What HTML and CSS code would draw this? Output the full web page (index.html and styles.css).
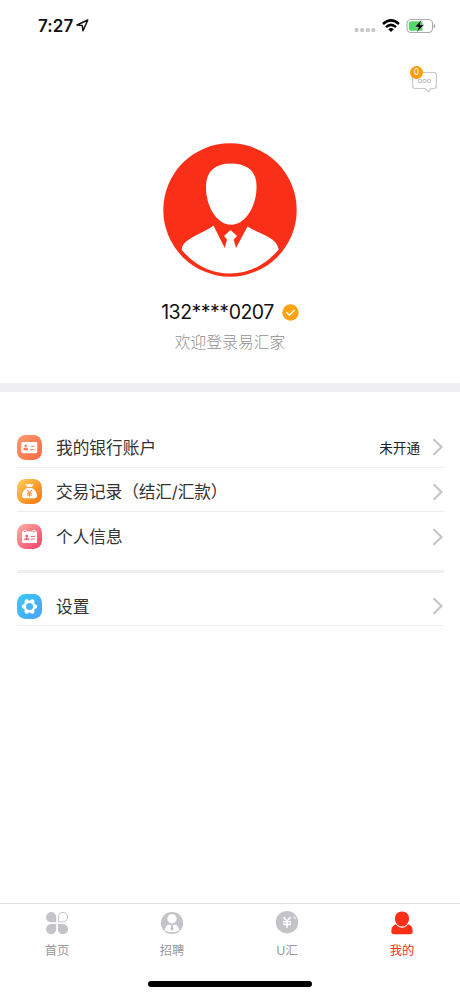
FILE: index.html
```html
<!DOCTYPE html>
<html lang="zh-CN">
<head>
<meta charset="utf-8">
<title>我的</title>
<link rel="stylesheet" href="styles.css">
</head>
<body>
<div class="app">
  <header class="status">
    <div class="clock">
      <span class="time">7:27</span>
      <svg width="13" height="13" viewBox="0 0 13 13"><path d="M1 6 11.8 1 7 11.8 6.3 6.6Z" fill="none" stroke="#111" stroke-width="1.5" stroke-linejoin="round"/></svg>
    </div>
    <div class="signals">
      <svg class="cell" width="22" height="6" viewBox="0 0 22 6" fill="#c8c8c8"><rect x="0.5" y="1" width="4" height="4" rx="1.5"/><rect x="6.2" y="1" width="4" height="4" rx="1.5"/><rect x="11.9" y="1" width="4" height="4" rx="1.5"/><rect x="17.4" y="1" width="4" height="4" rx="1.5"/></svg>
      <svg class="wifi" width="18" height="14" viewBox="0 0 18 14" fill="none" stroke="#000" stroke-width="2.5"><path d="M1 5Q9-2.2 17 5"/><path d="M4 8.1Q9 3.7 14 8.1"/><path d="M9 13 6.2 10.2Q9 7.9 11.8 10.2Z" fill="#000" stroke="none"/></svg>
      <svg class="battery" width="30" height="16" viewBox="0 0 30 16"><rect x="1" y="1.5" width="25.5" height="13" rx="4" fill="#fff" stroke="#aaa" stroke-width="1.1"/><path d="M5 3.3H16.5V12.7H5Q2.8 12.7 2.8 10.5V5.5Q2.8 3.3 5 3.3Z" fill="#54d769"/><path d="M27.7 5.8Q29.5 6.6 29.5 8T27.7 10.2Z" fill="#aaa"/><path d="M15.5 1.800 8.700 9H12.500L10.800 14.300 18.200 6.800H14Z" fill="#000" stroke="#fff" stroke-width=".4"/></svg>
    </div>
  </header>

  <div class="toolbar">
    <div class="message">
      <svg width="28" height="24" viewBox="0 0 28 24" fill="none" stroke="#c9c9cc" stroke-width="1.2"><path d="M5 1.500H23Q25.400 1.500 25.400 3.900V15.100Q25.400 17.500 23 17.500H20L17.800 20.800 14 17.500H4Q1.600 17.500 1.600 15.100V3.900Q1.600 1.500 5 1.500Z"/><circle cx="9" cy="10" r="1.700"/><circle cx="13.500" cy="10" r="1.700"/><circle cx="18" cy="10" r="1.700"/></svg>
      <span class="badge">0</span>
    </div>
  </div>

  <section class="profile">
    <svg class="avatar" width="134" height="134" viewBox="0 0 134 134"><circle cx="67" cy="67" r="66.700" fill="#f93017"/><path d="M68 20.500C84 20.500 93.500 28 93.500 43C94 62 83 81.800 68.500 81.800C53 81.800 42.500 62 43 43C43.500 28 52 20.500 68 20.500Z" fill="#fff"/><path d="M18.700 107C19 101 23 98 30 94C37 90 43 88 50.500 82.500L61.700 105 64 96.500 61 93 67.500 87 74 93 70.700 96.500 73 105 84.500 83.500C92 88 100 91 106 94.500C112 98 114.500 101 115.700 106.500Q95 130.500 67 130.500T18.700 107Z" fill="#fff"/></svg>
    <div class="account">
      <span class="phone">132****0207</span>
      <svg width="17" height="17" viewBox="0 0 17 17"><circle cx="8.500" cy="8.500" r="8.200" fill="#ffa40e"/><path d="M4.300 8.300 7.300 11 12.700 6" fill="none" stroke="#fff" stroke-width="1.300"/></svg>
    </div>
    <p class="welcome">欢迎登录易汇家</p>
  </section>

  <main class="menu">
    <div class="row">
      <svg class="icon" width="25" height="25" viewBox="0 0 25 25"><defs><linearGradient id="g1" x2="1" y2="1"><stop stop-color="#ff9a70"/><stop offset="1" stop-color="#f96840"/></linearGradient></defs><rect width="25" height="25" rx="8.500" fill="url(#g1)"/><rect x="4.300" y="7" width="16" height="11.300" rx="1.800" fill="#fff"/><g fill="#f97c55"><circle cx="8.700" cy="10.800" r="1.300"/><path d="M6.400 15.300V13.400Q8.700 11.800 11 13.400V15.300Z"/><path d="M14 10.800h3.500v1H14zM12.800 14.300h4.700v1h-4.700z"/></g></svg>
      <span class="label">我的银行账户</span><span class="value">未开通</span>
      <svg class="chevron" width="12" height="18" viewBox="0 0 12 18"><path d="M1.500 1.300 9.500 9 1.500 16.700"/></svg>
    </div>
    <div class="row">
      <svg class="icon" width="25" height="25" viewBox="0 0 25 25"><defs><linearGradient id="g2" x2="1" y2="1"><stop stop-color="#ffd05a"/><stop offset="1" stop-color="#f4730a"/></linearGradient></defs><rect width="25" height="25" rx="8.500" fill="url(#g2)"/><path d="M8.500 4.800 10.500 5.500 12.500 4.700 14.500 5.500 16.500 4.800 15 8H10ZM10 9H15C18.500 11.300 20 14 20 16.500Q20 19.300 17.500 19.300H7.500Q5 19.300 5 16.500C5 14 6.500 11.300 10 9Z" fill="#fff"/><path d="M10 11 12.500 13.700 15 11M12.500 13.700V17.800M10 14.200H15M10 16H15" fill="none" stroke="#f5932b" stroke-width="1.100"/></svg>
      <span class="label record">交易记录（结汇/汇款）</span>
      <svg class="chevron" width="12" height="18" viewBox="0 0 12 18"><path d="M1.500 1.300 9.500 9 1.500 16.700"/></svg>
    </div>
    <div class="row plain">
      <svg class="icon" width="25" height="25" viewBox="0 0 25 25"><defs><linearGradient id="g3" x2="1" y2="1"><stop stop-color="#ffb0a5"/><stop offset="1" stop-color="#f83e67"/></linearGradient></defs><rect width="25" height="25" rx="8.500" fill="url(#g3)"/><rect x="5" y="7.500" width="15" height="11.500" rx="1" fill="#fff"/><g fill="#f98990" stroke="#fff"><circle cx="8" cy="7.500" r="1.400"/><circle cx="17" cy="7.500" r="1.400"/></g><g fill="#f26279"><circle cx="9.700" cy="12" r="1.400"/><path d="M9 12.500h1.400v2h1.800V16H7.200V14.500H9zM13.700 12h4.200v1.100h-4.200zM13.700 14.500h4.200v1.100h-4.200z"/></g></svg>
      <span class="label">个人信息</span>
      <svg class="chevron" width="12" height="18" viewBox="0 0 12 18"><path d="M1.500 1.300 9.500 9 1.500 16.700"/></svg>
    </div>
    <div class="divider"></div>
    <div class="row settings">
      <svg class="icon" width="25" height="25" viewBox="0 0 25 25"><defs><linearGradient id="g4" x2="1" y2="1"><stop stop-color="#36ccf6"/><stop offset="1" stop-color="#4b9fff"/></linearGradient></defs><rect width="25" height="25" rx="8.500" fill="url(#g4)"/><g fill="#fff"><circle cx="12.500" cy="12.500" r="6"/><circle cx="18" cy="12.500" r="2.200"/><circle cx="7" cy="12.500" r="2.200"/><circle cx="15.300" cy="7.500" r="2.200"/><circle cx="9.700" cy="7.500" r="2.200"/><circle cx="15.300" cy="17.500" r="2.200"/><circle cx="9.700" cy="17.500" r="2.200"/></g><circle cx="12.500" cy="12.500" r="3.500" fill="#48b4fa"/></svg>
      <span class="label">设置</span>
      <svg class="chevron" width="12" height="18" viewBox="0 0 12 18"><path d="M1.500 1.300 9.500 9 1.500 16.700"/></svg>
    </div>
  </main>

  <nav class="tabs">
    <div class="tab">
      <svg width="24" height="24" viewBox="0 0 24 24" fill="#c3c3c8"><path d="M11.200 11.300H6A5.100 5.100 0 1 1 11.200 6Z"/><path d="M13.300 10.800V6A4.700 4.700 0 1 1 18 10.800Z" fill="#fff" stroke="#c3c3c8"/><path d="M11.200 13V18A5.100 5.100 0 1 1 6 13ZM12.900 13H18A5.100 5.100 0 1 1 12.900 18Z"/></svg>
      <span>首页</span>
    </div>
    <div class="tab">
      <svg width="24" height="24" viewBox="0 0 24 24"><circle cx="12" cy="12" r="11.100" fill="#c3c3c8"/><circle cx="12" cy="7.800" r="4.700" fill="#fff"/><path d="M4.700 19.500C5 15.500 7 13.800 10 13.400L12 15 14 13.400C17 13.800 19 15.500 19.300 19.500Q12 22.800 4.700 19.500Z" fill="#fff"/><path d="M11.300 14.200h1.400v1.500l.8 2.300-1.500 1.700-1.500-1.700.8-2.300Z" fill="#b9b9be"/></svg>
      <span>招聘</span>
    </div>
    <div class="tab">
      <svg width="24" height="24" viewBox="0 0 24 24"><circle cx="12" cy="11.200" r="11.200" fill="#c3c3c8"/><path d="M8.500 6 12 10.200 15.500 6M12 10V16.700M8 10.700H16M8 13.400H16" fill="none" stroke="#fff" stroke-width="1.600"/><path d="M18.700 5.300 20.700 8" stroke="#fff"/></svg>
      <span>U汇</span>
    </div>
    <div class="tab active">
      <svg width="24" height="24" viewBox="0 0 24 24" fill="#f93017"><path d="M5.500 13.200C2.500 14.500 1.300 17 1.300 20.500Q1.300 23.200 4 23.200H20Q22.700 23.200 22.700 20.500C22.700 17 21.500 14.500 18.500 13.200Q12 19 5.500 13.200Z"/><path d="M12 .5C16.500 .5 19 3.500 19 7.500C19 12 16 15.500 12 15.500S5 12 5 7.500C5 3.500 7.500 .5 12 .5Z"/><path d="M7 14.300Q12 18.300 17 14.300" fill="none" stroke="#fff" stroke-width="1"/></svg>
      <span>我的</span>
    </div>
  </nav>
  <div class="home"><div class="home-bar"></div></div>
</div>
</body>
</html>
```
FILE: styles.css
```css
* { box-sizing: border-box; }
body { margin: 0; background: #fff; font-family: Inter, "Noto Sans CJK SC", sans-serif; color: #333; }
svg { display: block; flex: none; }
.app { width: 460px; height: 996px; display: flex; flex-direction: column; overflow: hidden; }

.status { height: 51px; flex: none; display: flex; justify-content: space-between; padding: 0 24px 0 38px; }
.clock { display: flex; align-items: center; gap: 3px; color: #111; font-size: 17px; font-weight: 600; }
.time { letter-spacing: 0.1px; }
.signals { display: flex; align-items: center; }
.cell { margin: 9px 6px 0 0; }
.wifi { margin-right: 6px; }

.toolbar { height: 92px; flex: none; display: flex; justify-content: flex-end; padding: 20px 21px 0 0; }
.message { position: relative; width: 28px; height: 24px; }
.badge { position: absolute; left: -1px; top: -5px; width: 13px; height: 13px; border-radius: 50%; background: #ff9d08; color: #fff; font-size: 8.5px; line-height: 13px; text-align: center; }

.profile { height: 249px; flex: none; display: flex; flex-direction: column; align-items: center; border-bottom: 9px solid #eeeef3; }
.account { display: flex; align-items: center; gap: 8px; height: 28px; margin-top: 21px; font-size: 19.500px; color: #111; }
.phone { letter-spacing: -0.500px; }
.welcome { margin: 6px 0 0; font-size: 15.800px; line-height: 22px; font-weight: 300; color: #909090; }

.menu { flex: 1; padding: 31px 16px 0 17px; }
.row { height: 44.500px; display: flex; align-items: center; border-bottom: 1px solid #ececec; padding-top: 5px; }
.row.plain { border-bottom: 0; }
.label { flex: 1; margin-left: 14px; padding-top: 1px; font-size: 16.700px; line-height: 24px; }
.label.record { letter-spacing: -0.150px; }
.value { font-size: 13.600px; color: #222; margin-right: 12px; }
.chevron { fill: none; stroke: #c6c6c8; stroke-width: 2.200; }
.divider { height: 3px; margin-top: 13px; background: #efefef; }
.row.settings { height: 53.500px; padding-top: 15px; }

.tabs { height: 68px; flex: none; display: flex; border-top: 1px solid #dedee0; }
.tab { flex: 1; display: flex; flex-direction: column; align-items: center; padding: 7px 1px 0 0; font-size: 12.300px; line-height: 18px; gap: 7px; color: #999; }
.tab.active { color: #f93017; }
.home { height: 25px; flex: none; display: flex; justify-content: center; padding-top: 10px; }
.home-bar { width: 164px; height: 6px; border-radius: 3px; background: #000; }
```
